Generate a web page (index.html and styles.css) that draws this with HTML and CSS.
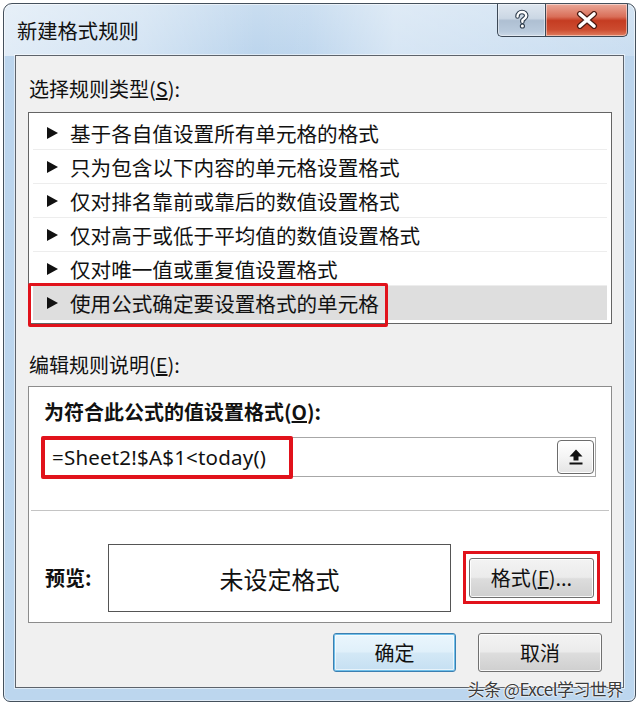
FILE: index.html
```html
<!DOCTYPE html>
<html lang="zh-CN">
<head>
<meta charset="utf-8">
<title>新建格式规则</title>
<link rel="stylesheet" href="styles.css">
</head>
<body>
<div class="window">
  <div class="titlebar">
    <div class="title">新建格式规则</div>
    <div class="caption">
      <div class="cap-btn help">
        <svg width="18" height="22" viewBox="0 0 18 22">
          <path d="M4.5 7.5 C4.5 4.5 6.8 3 9 3 C11.6 3 13.2 4.8 13.2 6.8 C13.2 9.2 10.4 9.8 9.4 11.4 L9.4 12.8" fill="none" stroke="#2e3c4c" stroke-width="4.6" stroke-linecap="round"/>
          <circle cx="9.4" cy="17" r="2.6" fill="#2e3c4c"/>
          <path d="M4.5 7.5 C4.5 4.5 6.8 3 9 3 C11.6 3 13.2 4.8 13.2 6.8 C13.2 9.2 10.4 9.8 9.4 11.4 L9.4 12.8" fill="none" stroke="#fff" stroke-width="2.4" stroke-linecap="round"/>
          <circle cx="9.4" cy="17" r="1.5" fill="#fff"/>
        </svg>
      </div>
      <div class="cap-btn close">
        <svg width="24" height="18" viewBox="0 0 24 18">
          <path d="M5 3 L19 15 M19 3 L5 15" fill="none" stroke="#4a1a12" stroke-width="6" stroke-linecap="round"/>
          <path d="M5 3 L19 15 M19 3 L5 15" fill="none" stroke="#fff" stroke-width="3.6" stroke-linecap="round"/>
        </svg>
      </div>
    </div>
  </div>

  <div class="client">
    <div class="label">选择规则类型(<u>S</u>):</div>
    <div class="listbox">
      <div class="row"><span class="tri"></span>基于各自值设置所有单元格的格式</div>
      <div class="row"><span class="tri"></span>只为包含以下内容的单元格设置格式</div>
      <div class="row"><span class="tri"></span>仅对排名靠前或靠后的数值设置格式</div>
      <div class="row"><span class="tri"></span>仅对高于或低于平均值的数值设置格式</div>
      <div class="row"><span class="tri"></span>仅对唯一值或重复值设置格式</div>
      <div class="row selected"><span class="tri"></span>使用公式确定要设置格式的单元格<span class="mark mark-row"></span></div>
    </div>

    <div class="label label2">编辑规则说明(<u>E</u>):</div>
    <div class="editbox">
      <div class="formula-section">
        <div class="bold-label">为符合此公式的值设置格式(<u>O</u>):</div>
        <div class="input">
          <span class="formula">=Sheet2!$A$1&lt;today()</span>
          <span class="mark mark-input"></span>
          <div class="refbtn">
            <svg width="20" height="20" viewBox="0 0 20 20">
              <path d="M10 2.5 L3.5 9.5 H7.5 V13.5 H12.5 V9.5 H16.5 Z" fill="#111"/>
              <rect x="3.5" y="15.5" width="13" height="2" fill="#111"/>
            </svg>
          </div>
        </div>
      </div>
      <div class="preview-section">
        <div class="bold-label preview-label">预览:</div>
        <div class="preview">未设定格式</div>
        <div class="fmt-wrap"><div class="btn fmt">格式(<u>F</u>)...</div></div>
      </div>
    </div>

    <div class="actions">
      <div class="btn ok">确定</div>
      <div class="btn cancel">取消</div>
    </div>
  </div>
  <div class="watermark">头条 @Excel学习世界</div>
</div>
</body>
</html>
```

FILE: styles.css
```css
html, body {
  margin: 0;
  padding: 0;
}
body {
  width: 640px;
  height: 705px;
  overflow: hidden;
  background: #ffffff;
  font-family: "Noto Sans CJK SC", "Noto Sans", sans-serif;
  color: #111;
}

.window {
  position: relative;
  margin: 3px 0 0 3px;
  width: 633px;
  height: 699px;
  box-sizing: border-box;
  border: 1px solid #44505c;
  border-radius: 9px 9px 7px 7px;
  padding: 0 11px 13px;
  display: flex;
  flex-direction: column;
  box-shadow: inset 0 0 0 1px rgba(255, 255, 255, 0.55);
  background:
    linear-gradient(90deg, rgba(255,255,255,0.55) 0, rgba(255,255,255,0.35) 22%, rgba(255,255,255,0) 40%, rgba(255,255,255,0.05) 48%, rgba(255,255,255,0.4) 62%, rgba(255,255,255,0.2) 100%) 0 0 / 100% 52px no-repeat,
    linear-gradient(180deg, #c9ddf0 0, #bcd5ed 52px, #bcd6ee 100%);
}

.titlebar {
  flex: none;
  height: 51px;
  display: flex;
  align-items: flex-start;
  justify-content: space-between;
}
.title {
  margin: 12px 0 0 2px;
  font-size: 20.3px;
  line-height: 28px;
  color: #111;
}
.caption {
  display: flex;
  margin-right: -4px;
}
.cap-btn {
  height: 33px;
  box-sizing: border-box;
  border: 1px solid #3c4856;
  border-top: none;
  display: flex;
  align-items: center;
  justify-content: center;
  box-shadow: inset 0 0 0 1px rgba(255,255,255,0.45);
}
.help {
  width: 48px;
  border-right: none;
  border-radius: 0 0 0 5px;
  background: linear-gradient(180deg, #dfe7f0 0, #cbd7e4 45%, #aebfd2 52%, #b9cadc 85%, #cbd8e6 100%);
}
.close {
  width: 83px;
  border-radius: 0 0 5px 0;
  background: linear-gradient(180deg, #eaa898 0, #d96e58 40%, #c53c22 52%, #cc4b2f 80%, #e07e60 100%);
}
.help svg, .close svg { display: block; }

.client {
  flex: 1;
  border: 1px solid #5d636b;
  background: #f0f0f0;
  padding: 21px 11px 0 12px;
  display: flex;
  flex-direction: column;
  box-shadow: 0 0 0 1px rgba(255,255,255,0.5);
}

.label {
  font-size: 20px;
  line-height: 24px;
  padding-left: 1px;
}
.label2 {
  margin-top: 29px;
}

.listbox {
  margin-top: 11px;
  border: 1px solid #646464;
  background: #fff;
  padding: 3px 4px;
}
.row {
  position: relative;
  height: 34px;
  box-sizing: border-box;
  display: flex;
  align-items: center;
  font-size: 20.6px;
  border-bottom: 1px solid #ededed;
}
.row.selected {
  background: #dedede;
  border-bottom: none;
}
.tri {
  width: 0;
  height: 0;
  margin-left: 14px;
  margin-right: 12px;
  border-left: 11px solid #111;
  border-top: 6px solid transparent;
  border-bottom: 6px solid transparent;
}

.mark {
  position: absolute;
  box-sizing: border-box;
  border: 3px solid #e1121b;
  border-radius: 2px;
  pointer-events: none;
}
.mark-row {
  left: -5px;
  top: -3px;
  width: 360px;
  height: 44px;
}
.mark-input {
  left: -4px;
  top: -2px;
  width: 252px;
  height: 43px;
  border-width: 4px;
}

.editbox {
  margin-top: 9px;
  height: 237px;
  box-sizing: border-box;
  border: 1px solid #8c8c8c;
  background: #fff;
  display: flex;
  flex-direction: column;
}
.formula-section {
  padding: 13px 15px 33px 15px;
  border-bottom: 1px solid #c4c4c4;
  margin: 0 2px;
}
.formula-section .bold-label { margin-left: -2px; }
.bold-label {
  font-size: 20px;
  line-height: 24px;
  font-weight: 700;
}
.input {
  position: relative;
  margin-top: 13px;
  margin-left: -2px;
  width: 552px;
  height: 40px;
  box-sizing: border-box;
  border: 1px solid #a7a7a7;
  display: flex;
  align-items: center;
  justify-content: space-between;
}
.formula {
  padding-left: 7px;
  font-family: "Noto Sans", "Open Sans", sans-serif;
  font-size: 20.5px;
  letter-spacing: 0.2px;
  color: #111;
}
.refbtn {
  margin-right: 1px;
  width: 37px;
  height: 34px;
  box-sizing: border-box;
  border: 1px solid #6c6c6c;
  border-radius: 4px;
  background: linear-gradient(180deg, #ffffff 0, #f4f4f4 50%, #e4e4e4 100%);
  box-shadow: inset 0 0 0 1px #fff;
  display: flex;
  align-items: center;
  justify-content: center;
}
.refbtn svg { display: block; }

.preview-section {
  display: flex;
  align-items: center;
  padding: 33px 0 0 16px;
}
.preview-label {
  width: 63px;
  flex: none;
}
.preview {
  width: 343px;
  height: 68px;
  box-sizing: border-box;
  border: 1px solid #555;
  background: #fff;
  display: flex;
  align-items: center;
  justify-content: center;
  font-size: 24px;
  color: #111;
}
.fmt-wrap {
  margin-left: 12px;
  border: 3px solid #e1121b;
  padding: 4px 3px 3px;
  margin-top: -2px;
}

.btn {
  box-sizing: border-box;
  border: 1px solid #707070;
  border-radius: 3px;
  background: linear-gradient(180deg, #f3f3f3 0, #ebebeb 48%, #dddddd 52%, #cfcfcf 100%);
  box-shadow: inset 0 0 0 1px rgba(255,255,255,0.85);
  display: flex;
  align-items: center;
  justify-content: center;
  font-size: 20px;
  color: #111;
}
.fmt {
  width: 125px;
  height: 40px;
}

.actions {
  margin-top: 10px;
  margin-right: 10px;
  display: flex;
  justify-content: flex-end;
  gap: 22px;
}
.ok, .cancel {
  width: 123px;
  height: 39px;
}
.cancel { width: 124px; }
.ok {
  border-color: #3c7fb1;
  box-shadow: inset 0 0 0 1px #6fc0ea, inset 0 0 0 2px rgba(255,255,255,0.6);
  background: linear-gradient(180deg, #eaf6fd 0, #e0f0fa 48%, #d3e8f6 52%, #c5dff2 100%);
}

.watermark {
  position: absolute;
  right: 12px;
  bottom: 1px;
  font-size: 17px;
  line-height: 22px;
  color: #3a3a3a;
  letter-spacing: -0.5px;
  text-shadow: 0 0 2px #fff, 0 0 2px #fff, 0 0 1px #fff;
}
```
